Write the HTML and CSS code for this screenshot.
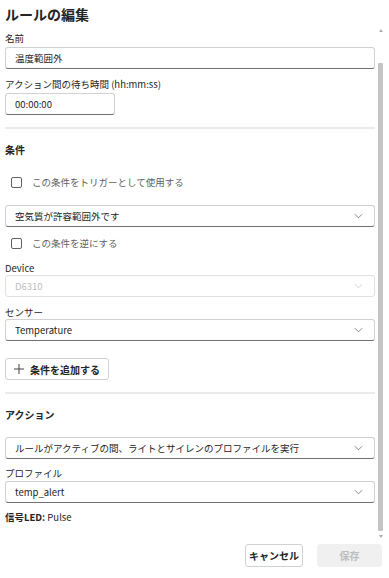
FILE: index.html
```html
<!DOCTYPE html>
<html lang="ja">
<head>
    <meta charset="UTF-8">
    <meta name="viewport" content="width=device-width, initial-scale=1.0">
    <title>ルールの編集</title>
    <link rel="stylesheet" href="styles.css">
</head>
<body>
    <div class="dialog">
        <h1 class="dialog-title">ルールの編集</h1>

        <div class="dialog-body">
            <!-- Scrollable form content -->
            <div class="rule-form">
                <label class="field-label first">名前</label>
                <div class="text-input">温度範囲外</div>

                <label class="field-label">アクション間の待ち時間 (hh:mm:ss)</label>
                <div class="text-input short">00:00:00</div>

                <hr class="divider">

                <h2 class="section-title">条件</h2>

                <div class="check-row first">
                    <span class="check-box"></span>
                    <span>この条件をトリガーとして使用する</span>
                </div>

                <div class="dropdown condition">
                    <span>空気質が許容範囲外です</span>
                    <svg class="chevron" viewBox="0 0 10 6"><path d="M1 1l4 4 4-4"/></svg>
                </div>

                <div class="check-row">
                    <span class="check-box"></span>
                    <span>この条件を逆にする</span>
                </div>

                <label class="field-label tight">Device</label>
                <div class="dropdown disabled">
                    <span>D6310</span>
                    <svg class="chevron" viewBox="0 0 10 6"><path d="M1 1l4 4 4-4"/></svg>
                </div>

                <label class="field-label tight">センサー</label>
                <div class="dropdown">
                    <span>Temperature</span>
                    <svg class="chevron" viewBox="0 0 10 6"><path d="M1 1l4 4 4-4"/></svg>
                </div>

                <button class="add-btn">
                    <svg class="plus" viewBox="0 0 10 10"><path d="M5 0v10M0 5h10"/></svg>
                    条件を追加する
                </button>

                <hr class="divider">

                <h2 class="section-title">アクション</h2>

                <div class="dropdown action">
                    <span>ルールがアクティブの間、ライトとサイレンのプロファイルを実行</span>
                    <svg class="chevron" viewBox="0 0 10 6"><path d="M1 1l4 4 4-4"/></svg>
                </div>

                <label class="field-label profile">プロファイル</label>
                <div class="dropdown">
                    <span>temp_alert</span>
                    <svg class="chevron" viewBox="0 0 10 6"><path d="M1 1l4 4 4-4"/></svg>
                </div>

                <p class="led-info"><strong>信号LED:</strong> Pulse</p>
            </div>

            <!-- Scrollbar -->
            <div class="scrollbar">
                <span class="arrow up"></span>
                <span class="thumb"></span>
                <span class="arrow down"></span>
            </div>
        </div>

        <div class="dialog-actions">
            <button class="btn">キャンセル</button>
            <button class="btn primary" disabled>保存</button>
        </div>
    </div>
</body>
</html>
```

FILE: styles.css
```css
/* General page styling */
body {
    margin: 0;
    background-color: #ffffff;
    font-family: "Noto Sans CJK JP", "Noto Sans", sans-serif;
    font-size: 9.5px;
    color: #242424;
}

.dialog {
    width: 389px;
    height: 578px;
}

.dialog-title {
    margin: 0;
    padding: 4px 5px 0;
    height: 24px;
    font-size: 14px;
    line-height: 20px;
    font-weight: 700;
}

/* --- Body: form + scrollbar --- */
.dialog-body {
    display: flex;
    height: 512px;
    padding-left: 5px;
}

.rule-form {
    flex: 1;
    display: flex;
    flex-direction: column;
    padding-top: 3px;
}

.field-label {
    display: block;
    line-height: 14px;
    margin-top: 8px;
    margin-bottom: 2px;
}

.field-label.first {
    margin-top: 0;
}

.field-label.tight {
    margin-bottom: 0;
}

.field-label.profile {
    margin-top: 7px;
    margin-bottom: 1px;
}

.text-input,
.dropdown {
    box-sizing: border-box;
    height: 22px;
    border: 1px solid #d1d1d1;
    border-bottom-color: #707070;
    border-radius: 3px;
    padding: 0 9px;
    display: flex;
    align-items: center;
    line-height: 14px;
}

.text-input.short {
    width: 110px;
}

.dropdown {
    justify-content: space-between;
}

.dropdown.condition {
    margin-top: 13px;
}

.dropdown.action {
    margin-top: 15px;
}

.dropdown.disabled {
    color: #bdbdbd;
    border-color: #e0e0e0;
}

.chevron {
    width: 9px;
    height: 6px;
    margin-right: 2px;
    fill: none;
    stroke: #707070;
    stroke-width: 0.9;
}

.dropdown.disabled .chevron {
    stroke: #c8c8c8;
}

.divider {
    margin: 12px 0 0;
    border: none;
    height: 2px;
    background-color: #ebebeb;
}

.section-title {
    margin: 14px 0 0;
    font-size: 10px;
    line-height: 14px;
    font-weight: 700;
}

/* --- Checkboxes --- */
.check-row {
    display: flex;
    align-items: center;
    gap: 10px;
    height: 20px;
    padding-left: 6px;
    color: #616161;
    margin-top: 6px;
}

.check-row.first {
    margin-top: 15px;
}

.check-box {
    box-sizing: border-box;
    width: 11px;
    height: 11px;
    border: 1px solid #616161;
    border-radius: 2px;
}

/* --- Buttons --- */
.add-btn {
    align-self: flex-start;
    margin-top: 17px;
    height: 22px;
    width: 104px;
    display: flex;
    align-items: center;
    justify-content: center;
    gap: 6px;
    border: 1px solid #d1d1d1;
    border-radius: 3px;
    background: #ffffff;
    font-family: inherit;
    font-size: 10px;
    font-weight: 700;
    color: #242424;
    padding: 0;
}

.plus {
    width: 10px;
    height: 10px;
    stroke: #424242;
    stroke-width: 1;
}

.led-info {
    margin: 7px 0 0;
    line-height: 14px;
}

.led-info strong {
    font-weight: 700;
}

/* --- Scrollbar --- */
.scrollbar {
    width: 5px;
    margin-left: 3px;
    margin-right: 6px;
    display: flex;
    flex-direction: column;
    align-items: center;
}

.arrow {
    width: 0;
    height: 0;
    border-left: 2px solid transparent;
    border-right: 2px solid transparent;
}

.arrow.up {
    margin-top: 1px;
    border-bottom: 3px solid #b0b0b0;
}

.arrow.down {
    margin-top: 4px;
    border-top: 3px solid #b0b0b0;
}

.thumb {
    width: 5px;
    height: 468px;
    margin-top: 31px;
    background-color: #c4c4c4;
    border-radius: 1px;
}

/* --- Footer buttons --- */
.dialog-actions {
    display: flex;
    justify-content: flex-end;
    gap: 14px;
    padding: 4px 7px 0 0;
}

.btn {
    height: 23px;
    width: 58px;
    border: 1px solid #d1d1d1;
    border-radius: 3px;
    background: #ffffff;
    font-family: inherit;
    font-size: 10px;
    font-weight: 700;
    color: #242424;
    padding: 0;
}

.btn.primary {
    width: 65px;
    border-color: #f0f0f0;
    background: #f0f0f0;
    color: #bdbdbd;
}
```
